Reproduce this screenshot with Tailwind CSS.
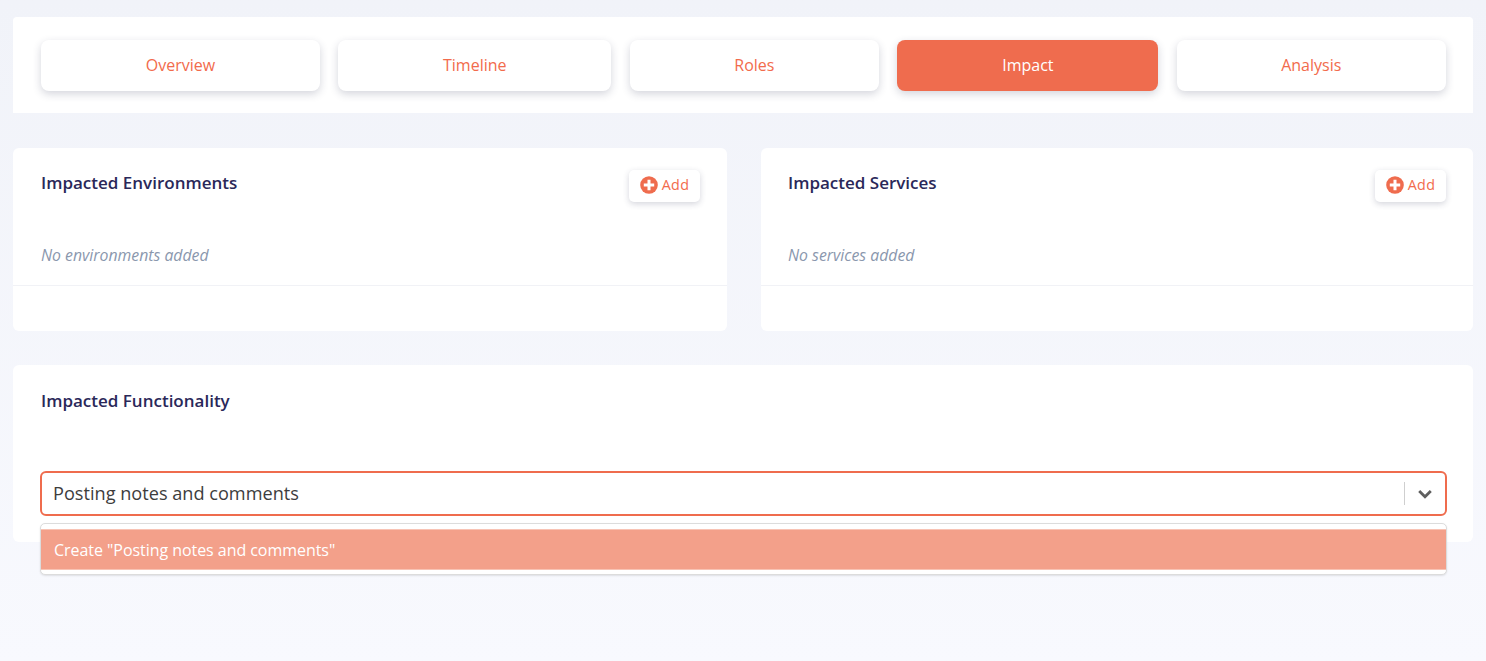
<!DOCTYPE html>
<html lang="en">
<head>
    <meta charset="UTF-8">
    <title>Impact</title>
    <script src="https://cdn.jsdelivr.net/npm/@tailwindcss/browser@4"></script>
</head>
<body class="h-[661px] overflow-hidden bg-gradient-to-b from-[#f1f3f9] to-[#f8f9fe] font-['Open_Sans',sans-serif]">
    <div class="pt-[17px] pl-[13px] pr-[13px]">

        <!-- Tabs -->
        <nav class="h-[96px] bg-white rounded-t-[4px] pt-[23px] pl-[28px] flex gap-[18.2px] text-[16px]">
            <a class="w-[279px] h-[51px] pb-[2px] flex items-center justify-center bg-white rounded-[8px] text-[#f26b4c] shadow-[0_3px_8px_rgba(40,45,80,0.2)]">Overview</a>
            <a class="w-[273.2px] h-[51px] pb-[2px] flex items-center justify-center bg-white rounded-[8px] text-[#f26b4c] shadow-[0_3px_8px_rgba(40,45,80,0.2)]">Timeline</a>
            <a class="w-[249.6px] h-[51px] pb-[2px] flex items-center justify-center bg-white rounded-[8px] text-[#f26b4c] shadow-[0_3px_8px_rgba(40,45,80,0.2)]">Roles</a>
            <a class="w-[261px] h-[51px] pb-[2px] flex items-center justify-center bg-[#ef6c4e] rounded-[8px] text-white shadow-[0_3px_8px_rgba(40,45,80,0.2)]">Impact</a>
            <a class="w-[269.4px] h-[51px] pb-[2px] flex items-center justify-center bg-white rounded-[8px] text-[#f26b4c] shadow-[0_3px_8px_rgba(40,45,80,0.2)]">Analysis</a>
        </nav>

        <!-- Impacted lists -->
        <div class="mt-[35px] flex gap-[34px]">
            <section class="w-[714px] h-[183px] bg-white rounded-[6px]">
                <div class="h-[138px] border-b border-[#f1f2f6] pl-[28px] pr-[27px] pt-[22px]">
                    <div class="flex justify-between items-start">
                        <h2 class="text-[17px] leading-[25px] font-semibold text-[#2a2859]">Impacted Environments</h2>
                        <button class="w-[71px] h-[32px] pb-[2px] flex items-center justify-center gap-[4px] bg-white rounded-[5px] text-[14.3px] font-medium tracking-[0.3px] text-[#f26b4c] shadow-[0_2px_6px_rgba(40,45,80,0.2)]">
                            <svg class="w-[18px] h-[18px]" viewBox="0 0 18 18"><circle cx="9" cy="9" r="8.8" fill="#ef6c4e"/><path d="M9 3.8v10.4M3.8 9h10.4" stroke="#fff" stroke-width="3"/></svg>
                            Add
                        </button>
                    </div>
                    <p class="mt-[42px] text-[15.8px] leading-[22px] italic text-[#8a97ad]">No environments added</p>
                </div>
            </section>
            <section class="w-[712px] h-[183px] bg-white rounded-[6px]">
                <div class="h-[138px] border-b border-[#f1f2f6] pl-[27px] pr-[27px] pt-[22px]">
                    <div class="flex justify-between items-start">
                        <h2 class="text-[17px] leading-[25px] font-semibold text-[#2a2859]">Impacted Services</h2>
                        <button class="w-[71px] h-[32px] pb-[2px] flex items-center justify-center gap-[4px] bg-white rounded-[5px] text-[14.3px] font-medium tracking-[0.3px] text-[#f26b4c] shadow-[0_2px_6px_rgba(40,45,80,0.2)]">
                            <svg class="w-[18px] h-[18px]" viewBox="0 0 18 18"><circle cx="9" cy="9" r="8.8" fill="#ef6c4e"/><path d="M9 3.8v10.4M3.8 9h10.4" stroke="#fff" stroke-width="3"/></svg>
                            Add
                        </button>
                    </div>
                    <p class="mt-[42px] text-[15.8px] leading-[22px] italic text-[#8a97ad]">No services added</p>
                </div>
            </section>
        </div>

        <!-- Functionality -->
        <section class="mt-[34px] h-[177px] bg-white rounded-[6px] pl-[28px] pr-[27px] pt-[23px] relative">
            <h2 class="text-[17px] leading-[25px] font-semibold text-[#2a2859]">Impacted Functionality</h2>
            <div class="mt-[58px] mx-[-1px] h-[45px] border-2 border-[#ef6c4e] rounded-[6px] bg-white flex items-center pl-[11px] pr-[13px]">
                <span class="flex-1 text-[18.15px] text-[#3d3d3d]">Posting notes and comments</span>
                <span class="w-px h-[23px] bg-[#cfcfcf]"></span>
                <svg class="ml-[13px] w-[14px] h-[10px]" viewBox="0 0 14 10"><path d="M1.2 2 7 7.8 12.8 2" fill="none" stroke="#5f5f5f" stroke-width="2.8"/></svg>
            </div>
            <!-- Dropdown menu -->
            <div class="absolute left-[27px] right-[26px] top-[158px] h-[52px] py-[5px] bg-white rounded-[5px] border border-[#dcdcdc] shadow-[0_1px_2px_rgba(0,0,0,0.1)]">
                <div class="h-[41px] flex items-center pl-[13px] bg-[#f3a08a] border-y border-[#f8c3b4] text-[16px] tracking-[-0.05px] text-white">Create "Posting notes and comments"</div>
            </div>
        </section>
    </div>
</body>
</html>
